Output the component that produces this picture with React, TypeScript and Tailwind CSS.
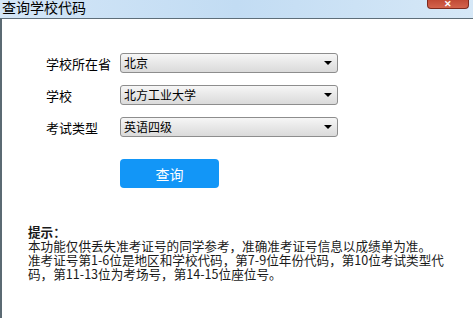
const fields = [
  { label: "学校所在省", value: "北京" },
  { label: "学校", value: "北方工业大学" },
  { label: "考试类型", value: "英语四级" },
];

const hintLines = [
  "本功能仅供丢失准考证号的同学参考，准确准考证号信息以成绩单为准。",
  "准考证号第1-6位是地区和学校代码，第7-9位年份代码，第10位考试类型代",
  "码，第11-13位为考场号，第14-15位座位号。",
];

const Select = ({ value }: { value: string }) => (
  <div className="w-[218px] h-[20px] flex items-center justify-between border border-[#8d8d8d] rounded-[3px] bg-gradient-to-b from-[#f6f6f6] to-[#dadada] pl-[3px] pr-[5px]">
    <span className="text-[12px] leading-none text-black">{value}</span>
    <span className="w-0 h-0 border-l-[4px] border-r-[4px] border-t-[4px] border-l-transparent border-r-transparent border-t-black" />
  </div>
);

export default function App() {
  return (
    <div
      className="w-[473px] h-[318px] bg-white flex flex-col overflow-hidden"
      style={{ fontFamily: '"Noto Sans CJK SC", "Noto Sans", sans-serif' }}
    >
      {/* title bar */}
      <div className="h-[19px] shrink-0 flex items-start justify-between bg-gradient-to-r from-[#d3e6f7] via-[#c2dcf3] to-[#d6e8f7] border-b border-[#5e6e79]">
        <span className="pl-[2px] -mt-[2px] text-[14px] leading-[18px] text-black">查询学校代码</span>
        <div className="mr-[4px] w-[42px] h-[9px] rounded-b-[4px] bg-gradient-to-b from-[#c14a35] to-[#d4634c] border border-t-0 border-[#7d2a1e] flex items-end justify-center overflow-hidden">
          <span className="text-white text-[9px] leading-[8px] font-bold">✕</span>
        </div>
      </div>

      {/* body */}
      <div className="flex-1 border-l-2 border-[#5b6a73] flex flex-col">
        <div className="pt-[34px] pl-[44px] flex flex-col gap-[12px]">
          {fields.map((f) => (
            <div key={f.label} className="flex items-center">
              <span className="w-[74px] text-[13px] leading-none text-black">{f.label}</span>
              <Select value={f.value} />
            </div>
          ))}
        </div>

        <div className="pl-[118px] mt-[22px]">
          <button className="w-[99px] h-[29px] rounded-[4px] bg-[#1296f7] text-white text-[14px] leading-none">
            查询
          </button>
        </div>

        <div className="pl-[26px] mt-[37px] text-[12.6px] leading-[14px] text-[#1a1a1a] whitespace-nowrap">
          <div className="font-bold">提示：</div>
          {hintLines.map((l) => (
            <div key={l}>{l}</div>
          ))}
        </div>
      </div>
    </div>
  );
}
